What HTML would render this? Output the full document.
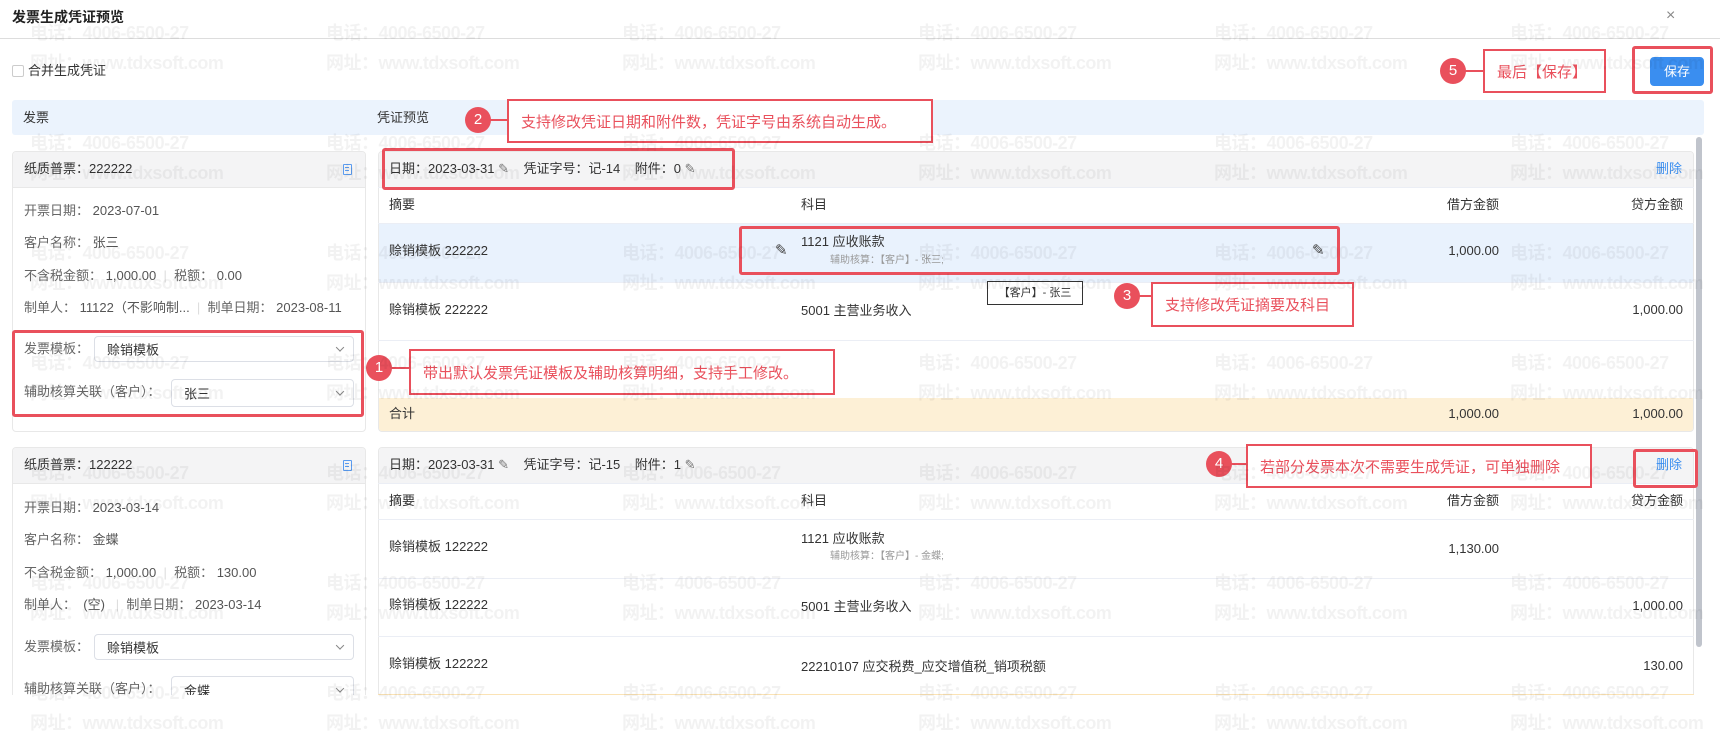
<!DOCTYPE html>
<html><head><meta charset="utf-8"><style>
*{margin:0;padding:0;box-sizing:border-box}
html,body{width:1720px;height:734px;overflow:hidden}
body{background:#fff;position:relative;font-family:"Liberation Sans","Noto Sans CJK SC",sans-serif;font-size:13px;color:#333}
.a{position:absolute}
.t{position:absolute;white-space:nowrap;transform:translateY(-50%);line-height:18px}
.g{color:#666}
.wm{position:absolute;white-space:nowrap;font-weight:bold;font-size:18px;letter-spacing:-0.5px;color:rgba(0,0,0,0.05);transform:translateY(-50%);pointer-events:none;z-index:50}
.rb{position:absolute;border:3px solid #e9505c;border-radius:3px;z-index:20}
.nb{position:absolute;border:2px solid #e9505c;background:#fff;color:#e9505c;font-size:15px;white-space:nowrap;display:flex;align-items:center;padding-left:12px;z-index:20}
.c{position:absolute;width:26px;height:26px;border-radius:50%;background:#e9505c;color:#fff;font-size:15px;text-align:center;line-height:26px;z-index:21}
.ln{position:absolute;height:2px;background:#e9505c;z-index:20}
.sel{position:absolute;border:1px solid #dcdfe6;border-radius:4px;background:#fff}
.sel span{position:absolute;left:12px;top:50%;transform:translateY(-50%);color:#333}
.sel i{position:absolute;right:10px;top:50%;width:6px;height:6px;border-right:1px solid #888;border-bottom:1px solid #888;transform:translateY(-75%) rotate(45deg)}
.hl{position:absolute;height:1px;background:#ebeef5}
.r{text-align:right;transform:translate(-100%,-50%)}
.doc{position:absolute;width:9px;height:11px;border:1.5px solid #5b9cf0;border-radius:1px;background:linear-gradient(#5b9cf0,#5b9cf0) 1px 2px/4px 1px no-repeat,linear-gradient(#5b9cf0,#5b9cf0) 1px 5px/4px 1px no-repeat}
</style></head><body>
<div class="t" style="left:12px;top:17px;font-weight:bold;font-size:14px;color:#222">发票生成凭证预览</div>
<div class="t" style="left:1666px;top:16px;font-size:16px;color:#888">×</div>
<div class="a" style="left:0;top:38px;width:1720px;height:1px;background:#ddd"></div>

<div class="a" style="left:12px;top:65px;width:12px;height:12px;border:1px solid #ccc;border-radius:2px"></div>
<div class="t" style="left:28px;top:71px">合并生成凭证</div>

<div class="a" style="left:1650px;top:57px;width:54px;height:29px;background:#3a8ef0;border-radius:4px;color:#fff;text-align:center;line-height:29px;font-size:13px">保存</div>

<div class="a" style="left:12px;top:100px;width:1692px;height:35px;background:#ebf3fd;border-radius:3px"></div>
<div class="t" style="left:23px;top:118px">发票</div>
<div class="t" style="left:377px;top:118px">凭证预览</div>

<!-- left card 1 -->
<div class="a" style="left:12px;top:151px;width:354px;height:281px;border:1px solid #e8e8e8;border-radius:4px;overflow:hidden">
<div class="a" style="left:0;top:0;width:100%;height:36px;background:#f4f4f5;border-bottom:1px solid #e8e8e8"></div>
</div>
<div class="t" style="left:24px;top:169px">纸质普票：222222</div>
<div class="doc" style="left:343px;top:164px"></div>
<div class="t g" style="left:24px;top:211px">开票日期： <span style="color:#555">2023-07-01</span></div>
<div class="t g" style="left:24px;top:243px">客户名称： <span style="color:#555">张三</span></div>
<div class="t g" style="left:24px;top:276px">不含税金额： <span style="color:#555">1,000.00</span> &nbsp;<span style="color:#ddd">|</span>&nbsp; 税额： <span style="color:#555">0.00</span></div>
<div class="t g" style="left:24px;top:308px">制单人： <span style="color:#555">11122（不影响制...</span> &nbsp;<span style="color:#ddd">|</span>&nbsp; 制单日期： <span style="color:#555">2023-08-11</span></div>
<div class="t g" style="left:24px;top:349px">发票模板：</div>
<div class="sel" style="left:94px;top:336px;width:260px;height:26px"><span>赊销模板</span><i></i></div>
<div class="t g" style="left:24px;top:392px">辅助核算关联（客户）：</div>
<div class="sel" style="left:171px;top:379px;width:183px;height:28px"><span>张三</span><i></i></div>

<!-- left card 2 -->
<div class="a" style="left:12px;top:447px;width:354px;height:260px;border:1px solid #e8e8e8;border-radius:4px;overflow:hidden">
<div class="a" style="left:0;top:0;width:100%;height:36px;background:#f4f4f5;border-bottom:1px solid #e8e8e8"></div>
</div>
<div class="t" style="left:24px;top:465px">纸质普票：122222</div>
<div class="doc" style="left:343px;top:460px"></div>
<div class="t g" style="left:24px;top:508px">开票日期： <span style="color:#555">2023-03-14</span></div>
<div class="t g" style="left:24px;top:540px">客户名称： <span style="color:#555">金蝶</span></div>
<div class="t g" style="left:24px;top:573px">不含税金额： <span style="color:#555">1,000.00</span> &nbsp;<span style="color:#ddd">|</span>&nbsp; 税额： <span style="color:#555">130.00</span></div>
<div class="t g" style="left:24px;top:605px">制单人： &nbsp;<span style="color:#555">(空)</span> &nbsp;&nbsp;<span style="color:#ddd">|</span>&nbsp; 制单日期： <span style="color:#555">2023-03-14</span></div>
<div class="t g" style="left:24px;top:647px">发票模板：</div>
<div class="sel" style="left:94px;top:634px;width:260px;height:26px"><span>赊销模板</span><i></i></div>
<div class="t g" style="left:24px;top:689px">辅助核算关联（客户）：</div>
<div class="sel" style="left:171px;top:676px;width:183px;height:28px"><span>金蝶</span><i></i></div>

<!-- right voucher 1 -->
<div class="a" style="left:378px;top:151px;width:1316px;height:281px;border:1px solid #e8e8e8;border-radius:4px;overflow:hidden">
<div class="a" style="left:0;top:0;width:100%;height:36px;background:#f4f4f5"></div>
<div class="a" style="left:0;top:72px;width:100%;height:59px;background:#e9f2fd"></div>
<div class="a" style="left:0;top:246px;width:100%;height:35px;background:#fdf0d6"></div>
</div>
<div class="hl" style="left:378px;top:187px;width:1316px"></div>
<div class="hl" style="left:378px;top:223px;width:1316px"></div>
<div class="hl" style="left:378px;top:282px;width:1316px"></div>
<div class="hl" style="left:378px;top:340px;width:1316px"></div>
<div class="t" style="left:389px;top:169px">日期：2023-03-31 <span style="color:#777">✎</span> &nbsp;&nbsp;&nbsp;凭证字号：记-14 &nbsp;&nbsp;&nbsp;附件：0 <span style="color:#777">✎</span></div>
<div class="t" style="left:1656px;top:169px;color:#3a8ef0">删除</div>
<div class="t" style="left:389px;top:205px">摘要</div>
<div class="t" style="left:801px;top:205px">科目</div>
<div class="t r" style="left:1499px;top:205px">借方金额</div>
<div class="t r" style="left:1683px;top:205px">贷方金额</div>
<div class="t" style="left:389px;top:251px">赊销模板 222222</div>
<div class="t" style="left:801px;top:242px">1121 应收账款</div>
<div class="t" style="left:830px;top:261px;font-size:10px;color:#999">辅助核算：【客户】- 张三;</div>
<div class="t" style="left:775px;top:251px;font-size:15px;color:#444">✎</div>
<div class="t" style="left:1312px;top:251px;font-size:15px;color:#444">✎</div>
<div class="t r" style="left:1499px;top:251px">1,000.00</div>
<div class="t" style="left:389px;top:310px">赊销模板 222222</div>
<div class="t" style="left:801px;top:311px">5001 主营业务收入</div>
<div class="t r" style="left:1683px;top:310px">1,000.00</div>
<div class="t" style="left:389px;top:414px">合计</div>
<div class="t r" style="left:1499px;top:414px">1,000.00</div>
<div class="t r" style="left:1683px;top:414px">1,000.00</div>
<div class="a" style="left:987px;top:281px;width:96px;height:24px;border:1px solid #333;background:#fff;font-size:11px;text-align:center;line-height:22px;z-index:22">【客户】- 张三</div>

<!-- right voucher 2 -->
<div class="a" style="left:378px;top:447px;width:1316px;height:260px;border:1px solid #e8e8e8;border-radius:4px;overflow:hidden">
<div class="a" style="left:0;top:0;width:100%;height:36px;background:#f4f4f5"></div>
</div>
<div class="hl" style="left:378px;top:483px;width:1316px"></div>
<div class="hl" style="left:378px;top:519px;width:1316px"></div>
<div class="hl" style="left:378px;top:578px;width:1316px"></div>
<div class="hl" style="left:378px;top:636px;width:1316px"></div>
<div class="a" style="left:378px;top:694px;width:1316px;height:1px;background:#fbe3b5"></div>
<div class="t" style="left:389px;top:465px">日期：2023-03-31 <span style="color:#777">✎</span> &nbsp;&nbsp;&nbsp;凭证字号：记-15 &nbsp;&nbsp;&nbsp;附件：1 <span style="color:#777">✎</span></div>
<div class="t" style="left:1656px;top:465px;color:#3a8ef0">删除</div>
<div class="t" style="left:389px;top:501px">摘要</div>
<div class="t" style="left:801px;top:501px">科目</div>
<div class="t r" style="left:1499px;top:501px">借方金额</div>
<div class="t r" style="left:1683px;top:501px">贷方金额</div>
<div class="t" style="left:389px;top:547px">赊销模板 122222</div>
<div class="t" style="left:801px;top:539px">1121 应收账款</div>
<div class="t" style="left:830px;top:557px;font-size:10px;color:#999">辅助核算：【客户】- 金蝶;</div>
<div class="t r" style="left:1499px;top:549px">1,130.00</div>
<div class="t" style="left:389px;top:605px">赊销模板 122222</div>
<div class="t" style="left:801px;top:607px">5001 主营业务收入</div>
<div class="t r" style="left:1683px;top:606px">1,000.00</div>
<div class="t" style="left:389px;top:664px">赊销模板 122222</div>
<div class="t" style="left:801px;top:667px">22210107 应交税费_应交增值税_销项税额</div>
<div class="t r" style="left:1683px;top:666px">130.00</div>
<div class="a" style="left:0;top:695px;width:1720px;height:39px;background:#fff"></div>

<!-- scrollbar -->
<div class="a" style="left:1696px;top:137px;width:6px;height:510px;background:#c0c4cc;border-radius:3px"></div>

<!-- annotations -->
<div class="rb" style="left:1632px;top:46px;width:81px;height:48px"></div>
<div class="c" style="left:1440px;top:58px">5</div><div class="ln" style="left:1464px;top:70px;width:20px"></div>
<div class="nb" style="left:1483px;top:49px;width:123px;height:44px">最后【保存】</div>

<div class="c" style="left:465px;top:107px">2</div><div class="ln" style="left:489px;top:119px;width:19px"></div>
<div class="nb" style="left:507px;top:99px;width:426px;height:44px">支持修改凭证日期和附件数，凭证字号由系统自动生成。</div>
<div class="rb" style="left:382px;top:148px;width:353px;height:42px"></div>

<div class="rb" style="left:739px;top:226px;width:601px;height:49px"></div>
<div class="c" style="left:1114px;top:283px">3</div><div class="ln" style="left:1138px;top:295px;width:14px"></div>
<div class="nb" style="left:1151px;top:282px;width:203px;height:45px">支持修改凭证摘要及科目</div>

<div class="rb" style="left:12px;top:330px;width:352px;height:87px"></div>
<div class="c" style="left:366px;top:355px">1</div><div class="ln" style="left:390px;top:367px;width:20px"></div>
<div class="nb" style="left:409px;top:349px;width:426px;height:46px">带出默认发票凭证模板及辅助核算明细，支持手工修改。</div>

<div class="c" style="left:1206px;top:451px">4</div><div class="ln" style="left:1230px;top:463px;width:17px"></div>
<div class="nb" style="left:1246px;top:444px;width:346px;height:44px">若部分发票本次不需要生成凭证，可单独删除</div>
<div class="rb" style="left:1633px;top:449px;width:65px;height:39px"></div>

<!-- watermarks -->
<div class="wm" style="left:30px;top:32px">电话：4006-6500-27</div><div class="wm" style="left:326px;top:32px">电话：4006-6500-27</div><div class="wm" style="left:622px;top:32px">电话：4006-6500-27</div><div class="wm" style="left:918px;top:32px">电话：4006-6500-27</div><div class="wm" style="left:1214px;top:32px">电话：4006-6500-27</div><div class="wm" style="left:1510px;top:32px">电话：4006-6500-27</div>
<div class="wm" style="left:30px;top:62px">网址：www.tdxsoft.com</div><div class="wm" style="left:326px;top:62px">网址：www.tdxsoft.com</div><div class="wm" style="left:622px;top:62px">网址：www.tdxsoft.com</div><div class="wm" style="left:918px;top:62px">网址：www.tdxsoft.com</div><div class="wm" style="left:1214px;top:62px">网址：www.tdxsoft.com</div><div class="wm" style="left:1510px;top:62px">网址：www.tdxsoft.com</div>
<div class="wm" style="left:30px;top:142px">电话：4006-6500-27</div><div class="wm" style="left:326px;top:142px">电话：4006-6500-27</div><div class="wm" style="left:622px;top:142px">电话：4006-6500-27</div><div class="wm" style="left:918px;top:142px">电话：4006-6500-27</div><div class="wm" style="left:1214px;top:142px">电话：4006-6500-27</div><div class="wm" style="left:1510px;top:142px">电话：4006-6500-27</div>
<div class="wm" style="left:30px;top:172px">网址：www.tdxsoft.com</div><div class="wm" style="left:326px;top:172px">网址：www.tdxsoft.com</div><div class="wm" style="left:622px;top:172px">网址：www.tdxsoft.com</div><div class="wm" style="left:918px;top:172px">网址：www.tdxsoft.com</div><div class="wm" style="left:1214px;top:172px">网址：www.tdxsoft.com</div><div class="wm" style="left:1510px;top:172px">网址：www.tdxsoft.com</div>
<div class="wm" style="left:30px;top:252px">电话：4006-6500-27</div><div class="wm" style="left:326px;top:252px">电话：4006-6500-27</div><div class="wm" style="left:622px;top:252px">电话：4006-6500-27</div><div class="wm" style="left:918px;top:252px">电话：4006-6500-27</div><div class="wm" style="left:1214px;top:252px">电话：4006-6500-27</div><div class="wm" style="left:1510px;top:252px">电话：4006-6500-27</div>
<div class="wm" style="left:30px;top:282px">网址：www.tdxsoft.com</div><div class="wm" style="left:326px;top:282px">网址：www.tdxsoft.com</div><div class="wm" style="left:622px;top:282px">网址：www.tdxsoft.com</div><div class="wm" style="left:918px;top:282px">网址：www.tdxsoft.com</div><div class="wm" style="left:1214px;top:282px">网址：www.tdxsoft.com</div><div class="wm" style="left:1510px;top:282px">网址：www.tdxsoft.com</div>
<div class="wm" style="left:30px;top:362px">电话：4006-6500-27</div><div class="wm" style="left:326px;top:362px">电话：4006-6500-27</div><div class="wm" style="left:622px;top:362px">电话：4006-6500-27</div><div class="wm" style="left:918px;top:362px">电话：4006-6500-27</div><div class="wm" style="left:1214px;top:362px">电话：4006-6500-27</div><div class="wm" style="left:1510px;top:362px">电话：4006-6500-27</div>
<div class="wm" style="left:30px;top:392px">网址：www.tdxsoft.com</div><div class="wm" style="left:326px;top:392px">网址：www.tdxsoft.com</div><div class="wm" style="left:622px;top:392px">网址：www.tdxsoft.com</div><div class="wm" style="left:918px;top:392px">网址：www.tdxsoft.com</div><div class="wm" style="left:1214px;top:392px">网址：www.tdxsoft.com</div><div class="wm" style="left:1510px;top:392px">网址：www.tdxsoft.com</div>
<div class="wm" style="left:30px;top:472px">电话：4006-6500-27</div><div class="wm" style="left:326px;top:472px">电话：4006-6500-27</div><div class="wm" style="left:622px;top:472px">电话：4006-6500-27</div><div class="wm" style="left:918px;top:472px">电话：4006-6500-27</div><div class="wm" style="left:1214px;top:472px">电话：4006-6500-27</div><div class="wm" style="left:1510px;top:472px">电话：4006-6500-27</div>
<div class="wm" style="left:30px;top:502px">网址：www.tdxsoft.com</div><div class="wm" style="left:326px;top:502px">网址：www.tdxsoft.com</div><div class="wm" style="left:622px;top:502px">网址：www.tdxsoft.com</div><div class="wm" style="left:918px;top:502px">网址：www.tdxsoft.com</div><div class="wm" style="left:1214px;top:502px">网址：www.tdxsoft.com</div><div class="wm" style="left:1510px;top:502px">网址：www.tdxsoft.com</div>
<div class="wm" style="left:30px;top:582px">电话：4006-6500-27</div><div class="wm" style="left:326px;top:582px">电话：4006-6500-27</div><div class="wm" style="left:622px;top:582px">电话：4006-6500-27</div><div class="wm" style="left:918px;top:582px">电话：4006-6500-27</div><div class="wm" style="left:1214px;top:582px">电话：4006-6500-27</div><div class="wm" style="left:1510px;top:582px">电话：4006-6500-27</div>
<div class="wm" style="left:30px;top:612px">网址：www.tdxsoft.com</div><div class="wm" style="left:326px;top:612px">网址：www.tdxsoft.com</div><div class="wm" style="left:622px;top:612px">网址：www.tdxsoft.com</div><div class="wm" style="left:918px;top:612px">网址：www.tdxsoft.com</div><div class="wm" style="left:1214px;top:612px">网址：www.tdxsoft.com</div><div class="wm" style="left:1510px;top:612px">网址：www.tdxsoft.com</div>
<div class="wm" style="left:30px;top:692px">电话：4006-6500-27</div><div class="wm" style="left:326px;top:692px">电话：4006-6500-27</div><div class="wm" style="left:622px;top:692px">电话：4006-6500-27</div><div class="wm" style="left:918px;top:692px">电话：4006-6500-27</div><div class="wm" style="left:1214px;top:692px">电话：4006-6500-27</div><div class="wm" style="left:1510px;top:692px">电话：4006-6500-27</div>
<div class="wm" style="left:30px;top:722px">网址：www.tdxsoft.com</div><div class="wm" style="left:326px;top:722px">网址：www.tdxsoft.com</div><div class="wm" style="left:622px;top:722px">网址：www.tdxsoft.com</div><div class="wm" style="left:918px;top:722px">网址：www.tdxsoft.com</div><div class="wm" style="left:1214px;top:722px">网址：www.tdxsoft.com</div><div class="wm" style="left:1510px;top:722px">网址：www.tdxsoft.com</div>
</body></html>
